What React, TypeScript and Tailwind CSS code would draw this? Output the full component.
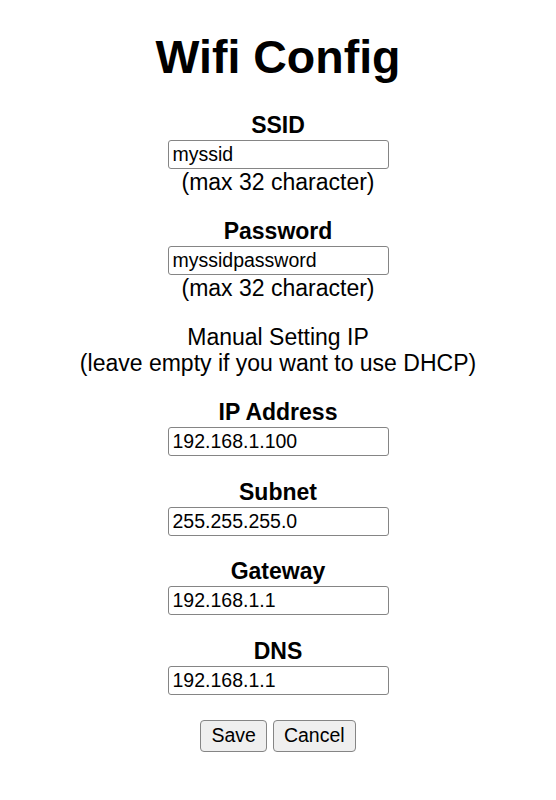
import React from 'react';

const fields = [
  { label: 'IP Address', value: '192.168.1.100' },
  { label: 'Subnet', value: '255.255.255.0' },
  { label: 'Gateway', value: '192.168.1.1' },
  { label: 'DNS', value: '192.168.1.1' },
];

function Input({ value }: { value: string }) {
  return (
    <input
      type="text"
      defaultValue={value}
      className="mt-[2px] h-[29px] w-[221px] rounded-[3px] border border-[#858585] bg-white pl-[4px] pr-[4px] text-[19.5px] leading-none text-black outline-none"
      style={{ fontFamily: '"Liberation Sans", Arial, sans-serif' }}
    />
  );
}

export default function App() {
  return (
    <div
      className="min-h-screen bg-white pt-[31px] flex flex-col items-center text-black text-[23px] leading-[26px]"
      style={{ fontFamily: '"Liberation Sans", Arial, sans-serif' }}
    >
      <h1 className="text-[46.5px] leading-[53px] font-bold mb-[28px]">Wifi Config</h1>

      <div className="flex flex-col items-center">
        <label className="font-bold">SSID</label>
        <Input value="myssid" />
        <span>(max 32 character)</span>
      </div>

      <div className="flex flex-col items-center mt-[23px]">
        <label className="font-bold">Password</label>
        <Input value="myssidpassword" />
        <span>(max 32 character)</span>
      </div>

      <div className="flex flex-col items-center mt-[23px]">
        <span>Manual Setting IP</span>
        <span>(leave empty if you want to use DHCP)</span>
      </div>

      <div className="flex flex-col items-center mt-[23px] gap-[22.5px]">
        {fields.map((f) => (
          <div key={f.label} className="flex flex-col items-center">
            <label className="font-bold">{f.label}</label>
            <Input value={f.value} />
          </div>
        ))}
      </div>

      <div className="flex gap-[6px] mt-[25px]">
        <button className="h-[32px] rounded-[4px] border border-[#858585] bg-[#efefef] px-[10px] text-[19.5px] leading-none text-black">
          Save
        </button>
        <button className="h-[32px] rounded-[4px] border border-[#858585] bg-[#efefef] px-[10px] text-[19.5px] leading-none text-black">
          Cancel
        </button>
      </div>
    </div>
  );
}
